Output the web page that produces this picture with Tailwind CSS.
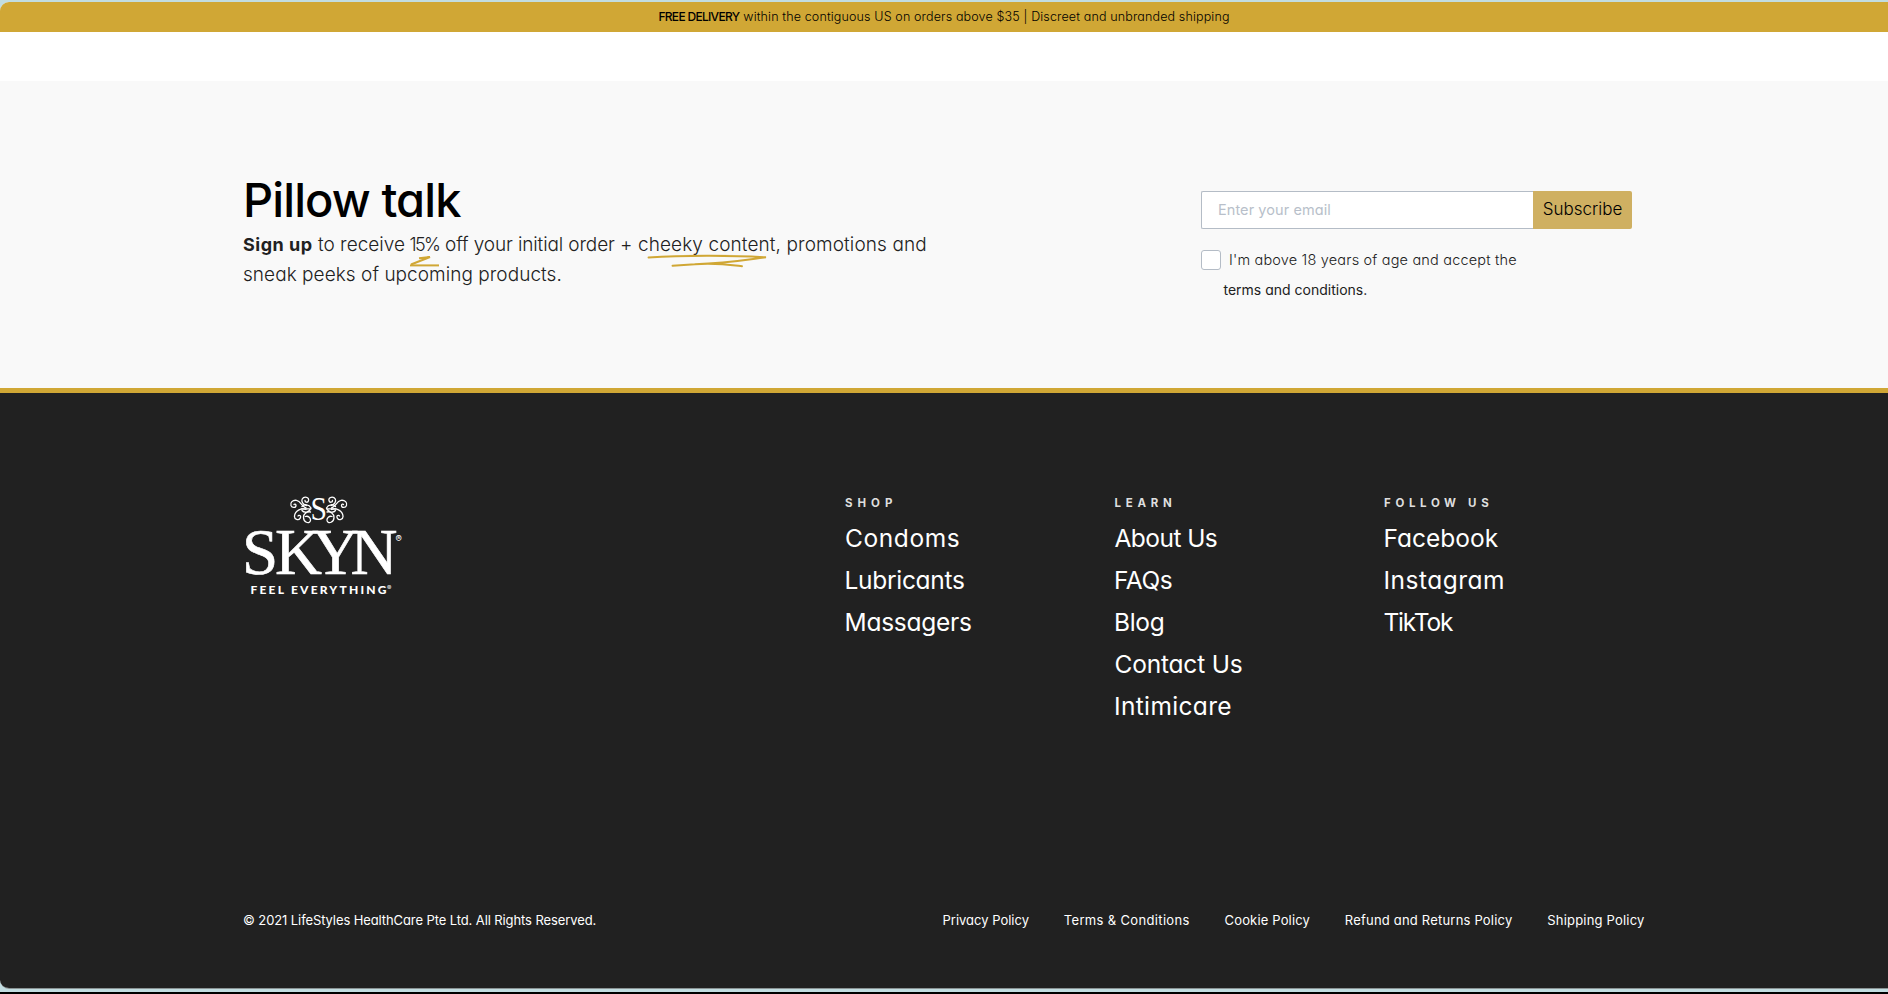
<!DOCTYPE html>
<html lang="en">
<head>
<meta charset="utf-8">
<title>SKYN</title>
<script src="https://cdn.jsdelivr.net/npm/@tailwindcss/browser@4"></script>
</head>
<body class="h-[994px] overflow-hidden bg-black font-['Inter',sans-serif] [font-feature-settings:'cv11']">
<div class="h-[992px] bg-[#c2dde1] pt-[2px]">
<div class="flex h-[987px] flex-col overflow-hidden rounded-l-[9px] border-b border-[#8a9394] bg-white whitespace-nowrap">

  <div class="flex h-[30px] shrink-0 items-start justify-center gap-[4px] bg-[#d0a735] pt-[4px] leading-[22px] text-[#1c1503]">
    <span class="text-[12px] font-medium tracking-[-0.7px] text-black">FREE DELIVERY</span>
    <span class="text-[12.5px] font-light tracking-[0.14px] text-black">within the contiguous US on orders above $35 | Discreet and unbranded shipping</span>
  </div>

  <section class="mt-[49px] flex h-[312px] shrink-0 border-b-[5px] border-[#d0a735] bg-[#f9f9f9] pl-[243px]">
    <div class="w-[958px] pt-[91px]">
      <h2 class="text-[47px] leading-[56px] font-medium tracking-[-0.9px] text-black">Pillow talk</h2>
      <div class="mt-[2px] text-[19px] leading-[30px] font-light text-[#212121]">
        <div class="flex">
          <span class="w-[75px] text-[18px] font-bold tracking-[0.5px]">Sign up</span>
          <span class="w-[91.5px] tracking-[0px]">to receive</span>
          <span class="relative w-[35.5px] text-[18px] tracking-[-1.6px]">15%<svg class="absolute top-[25px] left-[0.5px] h-[14px] w-[32px]" viewBox="410 255 32 14" fill="none" stroke="#d0a735"><path d="M419 258.3L430 257L411 264.5" stroke-width="2"/><path d="M410 265.4H439" stroke-width="2"/></svg></span>
          <span class="w-[193px] tracking-[-0.12px]">off your initial order +</span>
          <span class="relative tracking-[0.1px]">cheeky content, promotions and<svg class="absolute top-[23px] left-[8px] h-[16px] w-[124px]" viewBox="646 253 124 16" fill="none" stroke="#d0a735" stroke-width="1.9" stroke-linecap="round"><path d="M648.5 257.5C685 255 735 255.500 766 257.300C742 260.500 725 263.500 695 264.200L672.500 265.700M695 264.200C715 262.500 728 264.500 742 266.200"/></svg></span>
        </div>
        <div class="tracking-[0.05px]">sneak peeks of upcoming products.</div>
      </div>
    </div>
    <div class="w-[431px] pt-[110px]">
      <div class="flex h-[38px]">
        <div class="w-[332px] rounded-l-[2px] border border-r-0 border-[#b4bcc6] bg-white pl-[16px] text-[14.5px] leading-[36px] tracking-[0.08px] text-[#b8bfca]">Enter your email</div>
        <div class="w-[99px] rounded-r-[2px] bg-[#cfb062] text-center text-[17px] leading-[37px] font-light tracking-[0px] text-black">Subscribe</div>
      </div>
      <div class="mt-[21px] flex items-start text-[14.5px] text-[#212121]">
        <div class="size-[20px] rounded-[3px] border border-[#b4bcc6] bg-white"></div>
        <span class="ml-[8px] leading-[20px] font-light tracking-[0.18px]">I'm above 18 years of age and accept the</span>
      </div>
      <div class="mt-[10px] pl-[22.5px] text-[14px] leading-[20px] tracking-[0px] text-[#212121]">terms and conditions.</div>
    </div>
  </section>

  <footer class="flex flex-1 flex-col bg-[#212121] pt-[102px] pb-[58px] pl-[243px] text-white">
    <div class="grid grid-cols-[602px_269.5px_269.500px_200px]">
      <svg class="-mt-[5px] ml-[1px] h-[110px] w-[162px] overflow-visible" viewBox="244 490 162 110" fill="white">
        <g fill="none" stroke="white" stroke-width="1.3" stroke-linecap="round">
          <g id="curl">
            <path d="M306.500 505.500C303 504.500 301 501.500 302.200 499C304 496 309.500 496.800 308.500 500.800C307.800 503 304.800 502.500 305 500.500"/>
            <path d="M306 508C302 507 301 501 296.500 500.300C292.500 499.800 290 502.500 291 505.500C292 508.200 296 508 296 505.500C296 504 294.500 503.800 294 504.500"/>
            <path d="M306 509.500C301 507.500 295 511 294.500 516C294.200 519.500 298.500 521 300.200 518.200C301.500 515.500 299 514.500 298 516"/>
            <path d="M310.500 512C307 511.500 303.500 513.500 303.500 517.500C303.500 522 309 524.500 310.300 521C311.300 518 308 515.500 305.500 516.500M302 506.500C304 504 309 504 311 508C309 513 304 513 302 510.500M301.500 508.800H311"/>
          </g>
          <use href="#curl" transform="matrix(-1 0 0 1 637.500 0)"/>
        </g>
        <text x="310.500" y="520" font-family="Liberation Serif" font-size="34" textLength="16.500" lengthAdjust="spacingAndGlyphs">S</text>
        <text x="242 275 312 350.500" y="573.500" font-family="Liberation Serif" font-size="65" stroke="white" stroke-width="0.600">SKYN</text>
        <text x="250.500" y="593.500" font-family="Lato" font-weight="900" font-size="12" textLength="136" lengthAdjust="spacing">FEEL EVERYTHING</text>
        <text x="395.500" y="541.500" font-family="Inter" font-size="9.500">®</text>
        <text x="387" y="590" font-family="Inter" font-size="6.500">®</text>
      </svg>
      <div>
        <h3 class="text-[11.5px] leading-[16px] font-bold tracking-[5px] text-[#dedede]">SHOP</h3>
        <ul class="mt-[6px] text-[24.5px] leading-[42px]">
          <li class="tracking-[0.6px]">Condoms</li>
          <li class="-ml-[0.5px] tracking-[-0.3px]">Lubricants</li>
          <li class="-ml-[0.5px] tracking-[-0.25px]">Massagers</li>
        </ul>
      </div>
      <div>
        <h3 class="text-[11.5px] leading-[16px] font-bold tracking-[4.7px] text-[#dedede]">LEARN</h3>
        <ul class="mt-[6px] text-[24.5px] leading-[42px]">
          <li class="tracking-[-0.55px]">About Us</li>
          <li class="-ml-[0.5px] tracking-[-0.4px]">FAQs</li>
          <li class="-ml-[0.5px] tracking-[-0.3px]">Blog</li>
          <li class="tracking-[-0.2px]">Contact Us</li>
          <li class="-ml-[0.5px] tracking-[0.35px]">Intimicare</li>
        </ul>
      </div>
      <div>
        <h3 class="text-[11.5px] leading-[16px] font-bold tracking-[4.65px] text-[#dedede]">FOLLOW US</h3>
        <ul class="mt-[6px] text-[24.5px] leading-[42px]">
          <li class="-ml-[0.5px] tracking-[0px]">Facebook</li>
          <li class="-ml-[0.5px] tracking-[0.5px]">Instagram</li>
          <li class="-ml-[0.5px] tracking-[-1.2px]">TikTok</li>
        </ul>
      </div>
    </div>
    <div class="mt-auto flex text-[13px] leading-[20px]">
      <span class="w-[699.5px] tracking-[-0.1px]">© 2021 LifeStyles HealthCare Pte Ltd. All Rights Reserved.</span>
      <div class="flex gap-[34.8px]">
        <span class="tracking-[0px]">Privacy Policy</span>
        <span class="tracking-[0.34px]">Terms &amp; Conditions</span>
        <span class="tracking-[0.16px]">Cookie Policy</span>
        <span class="tracking-[0.2px]">Refund and Returns Policy</span>
        <span class="tracking-[0.2px]">Shipping Policy</span>
      </div>
    </div>
  </footer>
</div>
</div>
</body>
</html>
